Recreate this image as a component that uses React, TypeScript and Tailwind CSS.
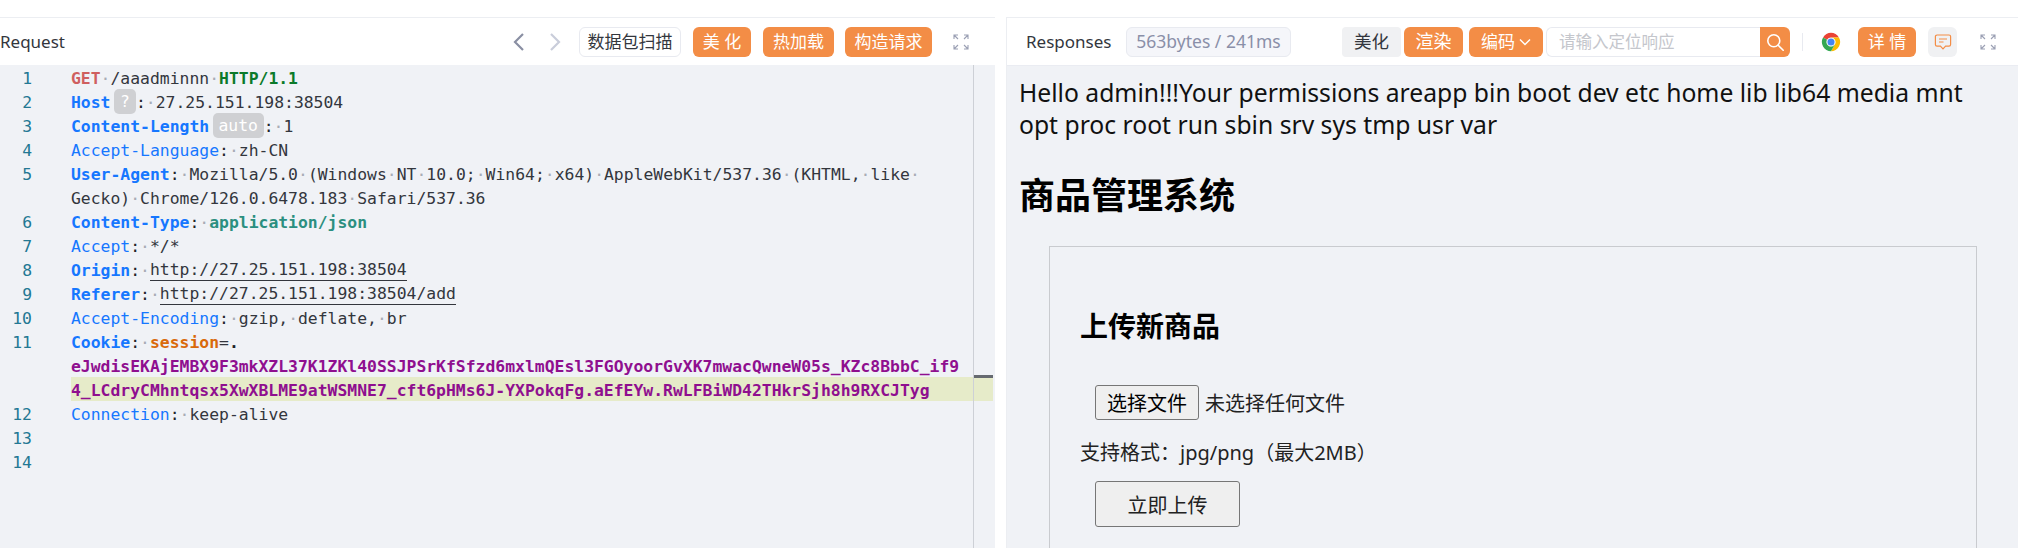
/**
 * Packet replay view: raw request on the left, rendered response on the right
 */

import React from 'react';

const MONO = 'font-["DejaVu_Sans_Mono","Noto_Sans_CJK_SC",monospace]';

// Icons
const ChevronIcon = ({ dir, className }: { dir: 'left' | 'right'; className: string }) => (
  <svg className={className} viewBox="0 0 16 24" fill="none" stroke="currentColor" strokeWidth={2.2}>
    <path d={dir === 'left' ? 'M12 4 4 12l8 8' : 'M4 4l8 8-8 8'} />
  </svg>
);

const ExpandIcon = () => (
  <svg className="w-4 h-4 text-[#9a9fb3]" viewBox="0 0 16 16" fill="none" stroke="currentColor" strokeWidth={1.1}>
    <path d="M1 5V1h4M1 1l4 4M15 5V1h-4M15 1l-4 4M1 11v4h4M1 15l4-4M15 11v4h-4M15 15l-4-4" />
  </svg>
);

const SearchIcon = () => (
  <svg className="w-[18px] h-[18px] text-white" viewBox="0 0 18 18" fill="none" stroke="currentColor" strokeWidth={1.6}>
    <circle cx="7.8" cy="7.8" r="6" />
    <path d="m12.2 12.2 5 5" strokeLinecap="round" />
  </svg>
);

const ChromeIcon = () => (
  <svg className="w-5 h-5" viewBox="0 0 48 48">
    <path fill="#ea4335" d="M4.95 13A22 22 0 0 1 43.05 13H24A11 11 0 0 0 14.47 18.5Z" />
    <path fill="#fbbc05" d="M43.05 13A22 22 0 0 1 24 46L33.53 29.5A11 11 0 0 0 24 13Z" />
    <path fill="#34a853" d="M24 46A22 22 0 0 1 4.95 13L14.47 18.5A11 11 0 0 0 33.53 29.5Z" />
    <circle cx="24" cy="24" r="8.5" fill="#4285f4" />
  </svg>
);

const MessageIcon = () => (
  <svg className="w-[18px] h-[18px] text-[#f38d46]" viewBox="0 0 18 18" fill="none" stroke="currentColor" strokeWidth={1.2}>
    <path d="M3 2h12a1.6 1.6 0 0 1 1.6 1.6v8a1.6 1.6 0 0 1-1.6 1.6h-3.4L9 15.8l-2.6-2.6H3a1.6 1.6 0 0 1-1.6-1.6v-8A1.6 1.6 0 0 1 3 2Z" />
    <path d="M5 6h8M5 9h4.5" />
  </svg>
);

// Syntax tokens of the raw request
const Dot = () => <span className="text-[#a8acb5]">·</span>;
const Key = ({ children, bold }: { children: string; bold?: boolean }) => (
  <span className={`text-[#1677ff] ${bold ? 'font-bold' : ''}`}>{children}</span>
);
const Colon = () => <span className="text-[#1f2328]">:</span>;
const Badge = ({ children, width }: { children: string; width: string }) => (
  <span className={`inline-block ${width} ml-[3.5px] h-[25px] rounded-[5px] bg-[#cfd0d3] text-center text-white leading-[26px] align-top`}>
    {children}
  </span>
);
const Link = ({ children }: { children: string }) => (
  <span className="inline-block h-6 border-b border-[#33363d] align-top leading-[26px]">{children}</span>
);
const Purple = ({ children }: { children: string }) => (
  <span className="font-bold text-[#8f0f8f]">{children}</span>
);

const rows: { n?: number; active?: boolean; text?: React.ReactNode }[] = [
  {
    n: 1,
    text: (
      <>
        <span className="font-bold text-[#cf5f5f]">GET</span>
        <Dot />
        /aaadminnn
        <Dot />
        <span className="font-bold text-[#0b7a2a]">HTTP/1.1</span>
      </>
    ),
  },
  {
    n: 2,
    text: (
      <>
        <Key bold>Host</Key>
        <Badge width="w-[22px]">?</Badge>
        <Colon />
        <Dot />
        27.25.151.198:38504
      </>
    ),
  },
  {
    n: 3,
    text: (
      <>
        <Key bold>Content-Length</Key>
        <Badge width="w-[51px]">auto</Badge>
        <Colon />
        <Dot />1
      </>
    ),
  },
  {
    n: 4,
    text: (
      <>
        <Key>Accept-Language</Key>
        <Colon />
        <Dot />
        zh-CN
      </>
    ),
  },
  {
    n: 5,
    text: (
      <>
        <Key bold>User-Agent</Key>
        <Colon />
        <Dot />
        Mozilla/5.0
        <Dot />
        (Windows
        <Dot />
        NT
        <Dot />
        10.0;
        <Dot />
        Win64;
        <Dot />
        x64)
        <Dot />
        AppleWebKit/537.36
        <Dot />
        (KHTML,
        <Dot />
        like
        <Dot />
      </>
    ),
  },
  {
    text: (
      <>
        Gecko)
        <Dot />
        Chrome/126.0.6478.183
        <Dot />
        Safari/537.36
      </>
    ),
  },
  {
    n: 6,
    text: (
      <>
        <Key bold>Content-Type</Key>
        <Colon />
        <Dot />
        <span className="font-bold text-[#2b8f80]">application/json</span>
      </>
    ),
  },
  {
    n: 7,
    text: (
      <>
        <Key>Accept</Key>
        <Colon />
        <Dot />
        */*
      </>
    ),
  },
  {
    n: 8,
    text: (
      <>
        <Key bold>Origin</Key>
        <Colon />
        <Dot />
        <Link>http://27.25.151.198:38504</Link>
      </>
    ),
  },
  {
    n: 9,
    text: (
      <>
        <Key bold>Referer</Key>
        <Colon />
        <Dot />
        <Link>http://27.25.151.198:38504/add</Link>
      </>
    ),
  },
  {
    n: 10,
    text: (
      <>
        <Key>Accept-Encoding</Key>
        <Colon />
        <Dot />
        gzip,
        <Dot />
        deflate,
        <Dot />
        br
      </>
    ),
  },
  {
    n: 11,
    text: (
      <>
        <Key bold>Cookie</Key>
        <Colon />
        <Dot />
        <span className="font-bold text-[#d9690b]">session</span>=
        <span className="font-bold text-[#1f2328]">.</span>
      </>
    ),
  },
  { text: <Purple>eJwdisEKAjEMBX9F3mkXZL37K1ZKl40SSJPSrKfSfzd6mxlmQEsl3FGOyoorGvXK7mwacQwneW05s_KZc8BbbC_if9</Purple> },
  { active: true, text: <Purple>4_LCdryCMhntqsx5XwXBLME9atWSMNE7_cft6pHMs6J-YXPokqFg.aEfEYw.RwLFBiWD42THkrSjh8h9RXCJTyg</Purple> },
  {
    n: 12,
    text: (
      <>
        <Key>Connection</Key>
        <Colon />
        <Dot />
        keep-alive
      </>
    ),
  },
  { n: 13 },
  { n: 14 },
];

const OrangeButton = ({ children, width, text = 'text-[17px]' }: { children: React.ReactNode; width: string; text?: string }) => (
  <button className={`${width} ${text} h-[30px] rounded-[6px] bg-[#f38d46] text-white flex items-center justify-center shrink-0`}>
    {children}
  </button>
);

export default function App() {
  return (
    <div className='w-[2018px] h-[548px] overflow-hidden bg-white pt-[17px] flex font-["Noto_Sans","Noto_Sans_CJK_SC",sans-serif]'>
      {/* Request */}
      <div className="w-[995px] shrink-0 flex flex-col border-t border-[#eceef2]">
        <div className="h-[47px] flex items-center pr-[26px] shrink-0">
          <span className="text-[17px] text-[#33363d] leading-none">Request</span>
          <ChevronIcon dir="left" className="ml-auto w-4 h-6 text-[#8a8fa3]" />
          <ChevronIcon dir="right" className="ml-5 w-4 h-6 text-[#c9cdda]" />
          <button className="ml-4 w-[102px] h-[30px] rounded-[6px] border border-[#e8eaf0] text-[17px] text-[#33363d] bg-white">
            数据包扫描
          </button>
          <div className="ml-3">
            <OrangeButton width="w-[58px]">美 化</OrangeButton>
          </div>
          <div className="ml-3">
            <OrangeButton width="w-[71px]">热加载</OrangeButton>
          </div>
          <div className="ml-[11px]">
            <OrangeButton width="w-[87px]">构造请求</OrangeButton>
          </div>
          <div className="ml-[21px]">
            <ExpandIcon />
          </div>
        </div>
        <div className={`relative flex-1 bg-[#f0f2f6] text-[16.4px] leading-[27px] text-[#33363d] ${MONO}`}>
          {rows.map((row, i) => (
            <div key={i} className="h-6 w-[993px] flex whitespace-pre">
              <span className="w-[32px] shrink-0 text-right text-[#237893]">{row.n}</span>
              <span className={`ml-[39px] flex-1 h-6 ${row.active ? 'bg-[#e6ebc9]' : ''}`}>{row.text}</span>
            </div>
          ))}
          {/* overview ruler */}
          <div className="absolute inset-y-0 left-[973px] w-5 border-l border-[#cdd0d6]">
            <div className="absolute top-[310px] w-full h-[3px] bg-[#666a70]" />
          </div>
        </div>
      </div>

      {/* Response */}
      <div className="ml-[11px] flex-1 flex flex-col border-t border-l border-[#eceef2]">
        <div className="h-[48px] shrink-0 flex items-center pl-[19px] border-b border-[#eaecf2]">
          <span className="w-[85px] shrink-0 text-[17px] text-[#33363d] leading-none">Responses</span>
          <span className="ml-[15px] w-[165px] h-[30px] rounded-[6px] border border-[#e8eaf0] bg-[#f5f6fa] text-[17.5px] text-[#8a8fa8] flex items-center justify-center">
            563bytes / 241ms
          </span>
          <button className="ml-[51px] w-[59px] h-[30px] rounded-[4px] bg-[#f0f1f3] text-[17.5px] text-[#33363d] shrink-0">
            美化
          </button>
          <div className="ml-[3px]">
            <OrangeButton width="w-[59px]" text="text-[18px]">渲染</OrangeButton>
          </div>
          <div className="ml-[6px]">
            <OrangeButton width="w-[74px]">
              编码
              <svg className="ml-1 w-3 h-3" viewBox="0 0 12 12" fill="none" stroke="currentColor" strokeWidth={1.5}>
                <path d="m1 3.5 5 5 5-5" />
              </svg>
            </OrangeButton>
          </div>
          <div className="ml-[3px] w-[244px] h-[30px] flex shrink-0">
            <input
              readOnly
              placeholder="请输入定位响应"
              className="w-[214px] h-full rounded-l-[6px] border border-r-0 border-[#e8eaf0] pl-3 text-[16.5px] text-[#33363d] placeholder:text-[#c4c6cc] outline-none"
            />
            <button className="w-[30px] h-full rounded-r-[6px] bg-[#f38d46] flex items-center justify-center">
              <SearchIcon />
            </button>
          </div>
          <div className="ml-3 w-px h-[18px] bg-[#e8eaf0]" />
          <div className="ml-[18px]">
            <ChromeIcon />
          </div>
          <div className="ml-[17px]">
            <OrangeButton width="w-[58px]">详 情</OrangeButton>
          </div>
          <button className="ml-3 w-[29px] h-[30px] rounded-[6px] bg-[#f0f1f3] flex items-center justify-center">
            <MessageIcon />
          </button>
          <div className="ml-[23px]">
            <ExpandIcon />
          </div>
        </div>

        <div className="flex-1 overflow-hidden bg-[#f0f2f6] pl-3 pt-[11px] text-black">
          <p className="text-[24.7px] leading-8 w-[960px] text-[#111]">
            Hello admin!!!Your permissions areapp bin boot dev etc home lib lib64 media mnt opt proc root run sbin srv sys tmp usr var
          </p>
          <h1 className="mt-[30px] text-[36px] leading-[50px] font-bold">商品管理系统</h1>
          <div className="mt-[25px] ml-[30px] w-[928px] h-[400px] border border-[#c9cbcf] pl-[30px] pt-[59px]">
            <h3 className="text-[28px] leading-[40px] font-bold">上传新商品</h3>
            <div className="mt-[39px] ml-[15px] flex items-center h-[35px] text-[20px]">
              <button className="w-[104px] h-[35px] pt-[3px] rounded-[3px] border border-[#767676] bg-[#efefef]">选择文件</button>
              <span className="ml-[6px] pt-[3px] text-[#222]">未选择任何文件</span>
            </div>
            <p className="mt-[19px] text-[20px] leading-7 text-[#222]">支持格式：jpg/png（最大2MB）</p>
            <button className="mt-[14px] ml-[15px] w-[145px] h-[46px] pt-[3px] rounded-[3px] border border-[#767676] bg-[#efefef] text-[20px] text-[#222]">
              立即上传
            </button>
          </div>
        </div>
      </div>
    </div>
  );
}
